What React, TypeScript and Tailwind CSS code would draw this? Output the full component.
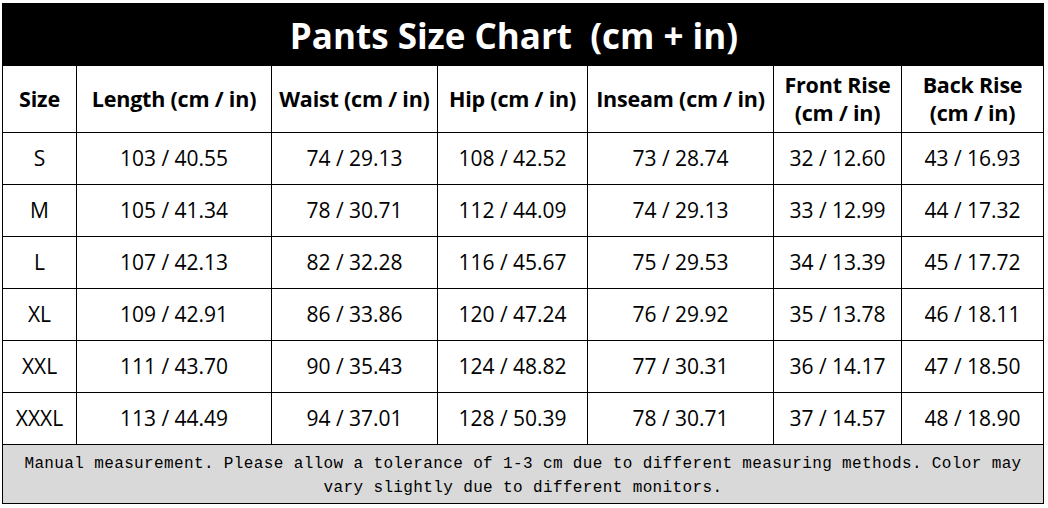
import React from "react";

const headers = [
    "Size",
    "Length (cm / in)",
    "Waist (cm / in)",
    "Hip (cm / in)",
    "Inseam (cm / in)",
    "Front Rise (cm / in)",
    "Back Rise (cm / in)",
];

const rows = [
    ["S", "103 / 40.55", "74 / 29.13", "108 / 42.52", "73 / 28.74", "32 / 12.60", "43 / 16.93"],
    ["M", "105 / 41.34", "78 / 30.71", "112 / 44.09", "74 / 29.13", "33 / 12.99", "44 / 17.32"],
    ["L", "107 / 42.13", "82 / 32.28", "116 / 45.67", "75 / 29.53", "34 / 13.39", "45 / 17.72"],
    ["XL", "109 / 42.91", "86 / 33.86", "120 / 47.24", "76 / 29.92", "35 / 13.78", "46 / 18.11"],
    ["XXL", "111 / 43.70", "90 / 35.43", "124 / 48.82", "77 / 30.31", "36 / 14.17", "47 / 18.50"],
    ["XXXL", "113 / 44.49", "94 / 37.01", "128 / 50.39", "78 / 30.71", "37 / 14.57", "48 / 18.90"],
];

export default function App() {
    return (
        <div className="w-[1048px] h-[508px] bg-white pt-[3px] pl-[2px]" style={{ fontFamily: '"Open Sans", "Noto Sans", sans-serif' }}>
            <table className="table-fixed border-collapse text-black">
                <colgroup>
                    <col className="w-[74px]" />
                    <col className="w-[195px]" />
                    <col className="w-[166px]" />
                    <col className="w-[150px]" />
                    <col className="w-[186px]" />
                    <col className="w-[128px]" />
                    <col className="w-[142px]" />
                </colgroup>
                <tbody>
                    <tr className="h-[62px]">
                        <td colSpan={7} className="bg-black border border-black text-white text-center font-bold text-[35px] leading-none pr-[18px] pt-[1px]">
                            Pants Size Chart&nbsp;&nbsp;(cm + in)
                        </td>
                    </tr>
                    <tr className="h-[67px]">
                        {headers.map((h, i) => (
                            <td key={i} className="border border-black text-center font-bold text-[21.5px] leading-[28px] px-0.5 tracking-[-0.2px]">
                                {h}
                            </td>
                        ))}
                    </tr>
                    {rows.map((r) => (
                        <tr key={r[0]} className="h-[52px]">
                            {r.map((c, i) => (
                                <td key={i} className="border border-black text-center text-[21px] leading-none">
                                    {c}
                                </td>
                            ))}
                        </tr>
                    ))}
                    <tr className="h-[59px]">
                        <td
                            colSpan={7}
                            className="border border-black bg-[#d9d9d9] text-center text-[16px] leading-[24px] tracking-[0.37px] pt-[3px]"
                            style={{ fontFamily: '"Liberation Mono", "DejaVu Sans Mono", monospace' }}
                        >
                            Manual measurement. Please allow a tolerance of 1-3 cm due to different measuring methods. Color may
                            <br />
                            vary slightly due to different monitors.
                        </td>
                    </tr>
                </tbody>
            </table>
        </div>
    );
}
